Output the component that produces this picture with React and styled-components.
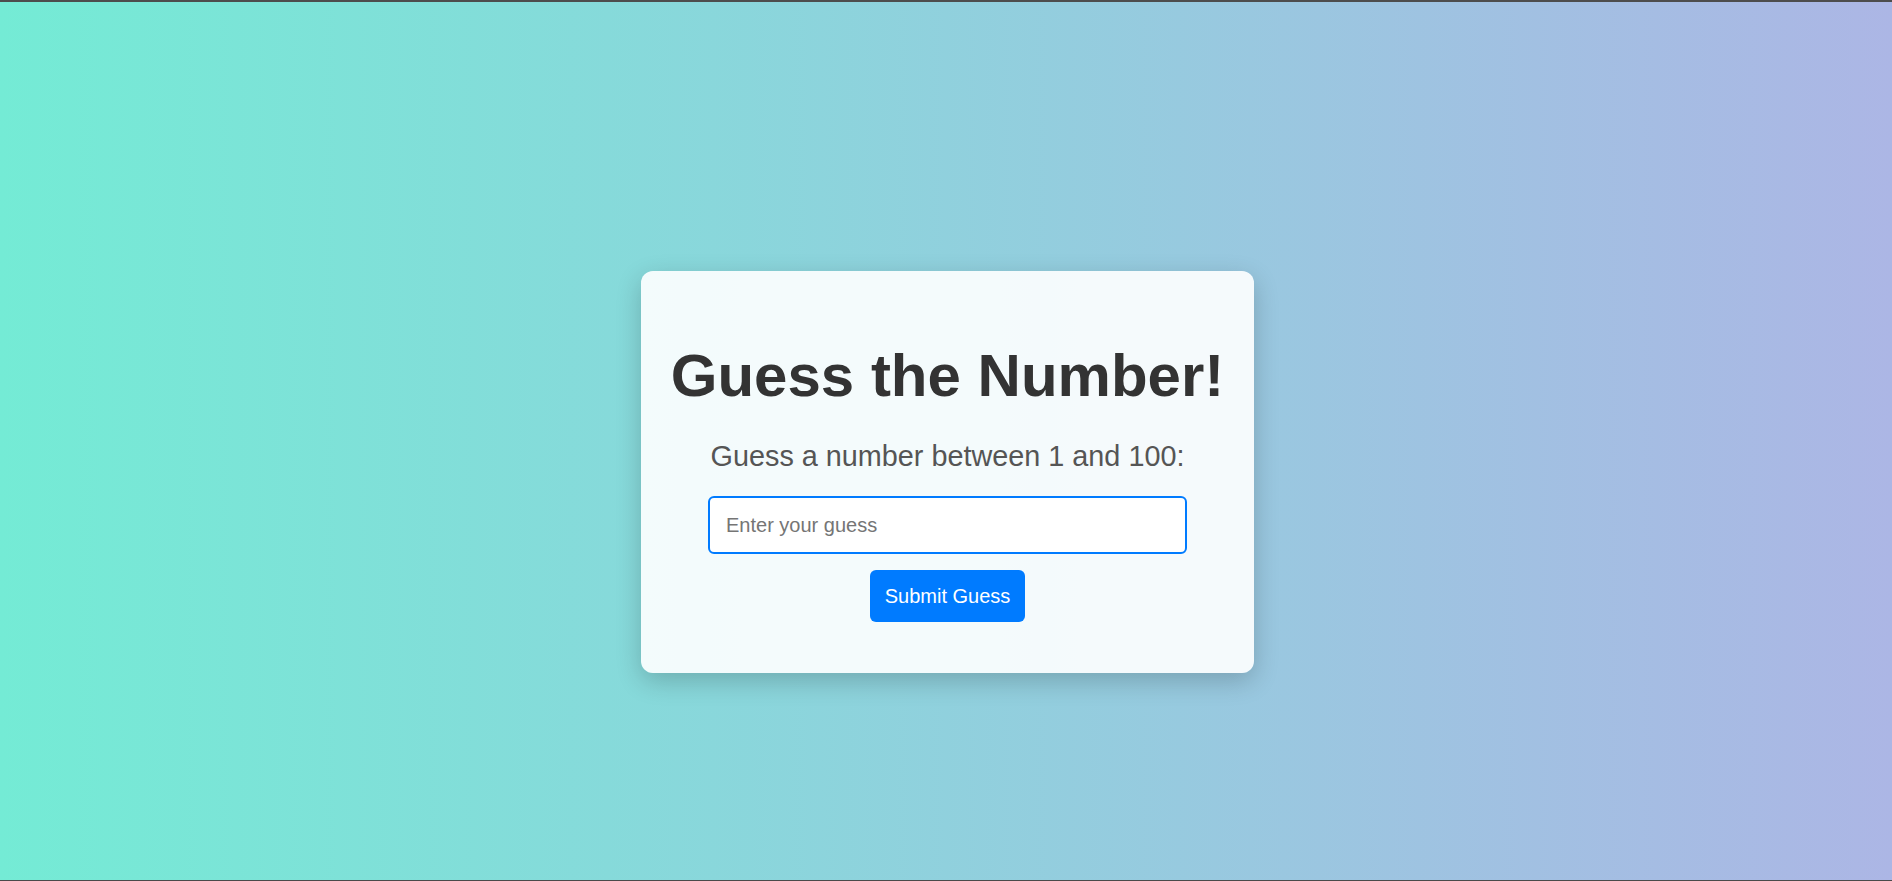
import React, { useState } from 'react';
import styled, { createGlobalStyle } from 'styled-components';

/* 전역 스타일 */
const GlobalStyle = createGlobalStyle`
  html, body {
    margin: 0;
    padding: 0;
  }
  body {
    font-family: "Liberation Sans", Arial, sans-serif;
  }
`;

const Page = styled.div`
  box-sizing: border-box;
  min-height: 100vh;
  display: flex;
  justify-content: center;
  align-items: center;
  padding: 62px 0 0 3px;
  border-top: 2px solid #4d4d4d;
  border-bottom: 1px solid #4a4a4a;
  background: linear-gradient(to right, #74ebd5, #acb6e5);
`;

const Card = styled.div`
  box-sizing: border-box;
  width: 613px;
  padding: 30px 30px 51px;
  border-radius: 12px;
  background: rgba(255, 255, 255, 0.9);
  box-shadow: 0 8px 26px rgba(0, 0, 0, 0.2);
  display: flex;
  flex-direction: column;
  align-items: center;
  text-align: center;
`;

const Title = styled.h1`
  margin: 40px 0 30px;
  font-size: 60px;
  line-height: 69px;
  font-weight: 700;
  color: #333;
  white-space: nowrap;
`;

const Prompt = styled.p`
  margin: 0 0 24px;
  font-size: 28.8px;
  line-height: 32px;
  color: #555;
`;

const GuessInput = styled.input`
  box-sizing: border-box;
  width: 479px;
  padding: 15px 16px;
  font-family: inherit;
  font-size: 20px;
  line-height: 24px;
  color: #333;
  background: #fff;
  border: 2px solid #007bff;
  border-radius: 6px;
  outline: none;
  &::placeholder {
    color: #757575;
  }
`;

const SubmitButton = styled.button`
  margin-top: 16px;
  padding: 15px;
  font-family: inherit;
  font-size: 20px;
  line-height: 22px;
  color: #fff;
  background: #007bff;
  border: 0;
  border-radius: 6px;
  cursor: pointer;
`;

const App = () => {
  const [guess, setGuess] = useState('');

  const onSubmit = e => {
    e.preventDefault();
  };

  return (
    <>
      <GlobalStyle />
      <Page>
        <Card as="form" onSubmit={onSubmit}>
          <Title>Guess the Number!</Title>
          <Prompt>Guess a number between 1 and 100:</Prompt>
          <GuessInput
            type="number"
            placeholder="Enter your guess"
            value={guess}
            onChange={e => setGuess(e.target.value)}
          />
          <SubmitButton type="submit">Submit Guess</SubmitButton>
        </Card>
      </Page>
    </>
  );
};

export default App;
